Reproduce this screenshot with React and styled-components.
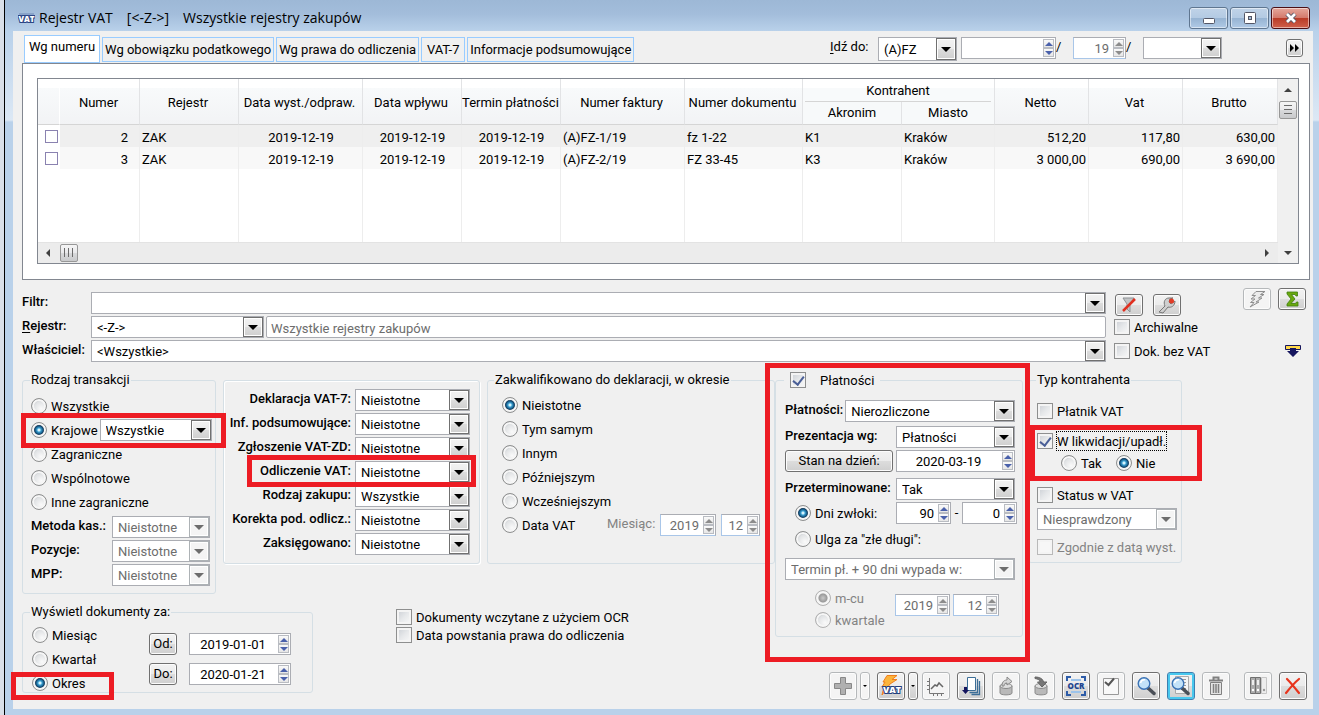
import styled, { createGlobalStyle, css } from "styled-components";

const GlobalStyle = createGlobalStyle`
  :root {
    --color-face: #f0f0f0;
    --color-frame: #b9d1ea;
    --color-line: #abadb3;
    --color-edge: #828790;
    --color-group: #d5dfe5;
    --color-text: #000;
    --color-muted: #6d6d6d;
    --color-mark: #ed1c24;
  }

  * {
    box-sizing: border-box;
  }

  body {
    margin: 0;
    font-family: Roboto, "DejaVu Sans Condensed", sans-serif;
    font-size: 13px;
    line-height: 16px;
    color: var(--color-text);
    background-color: #d9dfe8;
  }

  input, select, button {
    font: inherit;
    color: inherit;
    margin: 0;
  }
`;

/* ---------- window ---------- */

const Desktop = styled.div`
  min-height: 100vh;
  display: flex;
  padding-left: 4px;
`;

const Window = styled.main`
  flex: 1;
  min-width: 0;
  display: flex;
  flex-direction: column;
  border-left: 1px solid #000;
  padding: 0 6px 6px 8px;
  background: linear-gradient(
    #9db8d6 0,
    #a3bddb 14px,
    #b9d1ea 31px,
    #dce8f5 120px,
    #b9d1ea 122px
  );
`;

const TitleBar = styled.header`
  height: 31px;
  display: flex;
  align-items: center;
  gap: 4px;
  padding: 4px 3px 0 5px;
`;

const Title = styled.h1`
  flex: 1;
  display: flex;
  gap: 14px;
  margin: 0;
  font: 400 14px/20px "Open Sans", "Noto Sans", sans-serif;
`;

const WindowButtons = styled.div`
  display: flex;
  gap: 2px;
`;

const WindowButton = styled.button`
  width: 39px;
  height: 22px;
  padding: 0;
  display: grid;
  place-items: center;
  border: 1px solid ${(props) => (props.$close ? "#4c0f14" : "#5f7690")};
  border-radius: 3px;
  box-shadow: inset 0 0 0 1px rgba(255, 255, 255, 0.5);
  background: ${(props) =>
    props.$close
      ? "linear-gradient(#e5a79b 0, #d3796b 50%, #b83a26 50%, #d0604b)"
      : "linear-gradient(#c0d3e8 0, #b3cae3 50%, #96b3d2 50%, #b0cae6)"};
`;

const Content = styled.div`
  flex: 1;
  display: flex;
  flex-direction: column;
  background-color: var(--color-face);
`;

/* ---------- controls ---------- */

const ComboBox = styled.span`
  display: grid;
  flex: ${(props) => (props.$width ? "none" : "1")};
  width: ${(props) => (props.$width ? props.$width + "px" : "auto")};
  height: ${(props) => (props.$tall ? 24 : 22)}px;
  border: 1px solid var(--color-line);
  background-color: #fff;
`;

const ComboSelect = styled.select`
  grid-area: 1 / 1;
  min-width: 0;
  appearance: none;
  border: 0;
  padding: 2px 22px 0 5px;
  background: transparent;
  outline: none;

  &:disabled {
    color: var(--color-muted);
    opacity: 1;
  }
`;

const ComboCap = styled.span`
  grid-area: 1 / 1;
  justify-self: end;
  width: 20px;
  display: grid;
  place-items: center;
  pointer-events: none;
  border: 1px solid ${(props) => (props.$disabled ? "#adb2b5" : "#707070")};
  box-shadow: inset 0 0 0 1px #fff;
  background: ${(props) =>
    props.$disabled
      ? "#f4f4f4"
      : "linear-gradient(#f2f2f2 0, #ebebeb 50%, #dddddd 50%, #cfcfcf)"};
  color: ${(props) => (props.$disabled ? "#6d6d6d" : "#000")};
`;

const SpinBox = styled.span`
  display: flex;
  flex: ${(props) => (props.$width ? "none" : "1")};
  width: ${(props) => (props.$width ? props.$width + "px" : "auto")};
  height: 22px;
  padding-right: 1px;
  border: 1px solid var(--color-line);
  background-color: #fff;

  ${(props) =>
    props.$disabled &&
    css`
      border-left-color: #a9c6e8;
      border-bottom-color: #a9c6e8;
    `}
`;

const SpinInput = styled.input`
  flex: 1;
  width: 0;
  min-width: 0;
  border: 0;
  padding: 2px 4px 0 2px;
  background: transparent;
  outline: none;
  text-align: ${(props) => (props.$center ? "center" : "right")};

  &:disabled {
    color: var(--color-muted);
  }
`;

const SpinButtons = styled.span`
  width: 11px;
  display: grid;
  grid-template-rows: 1fr 1fr;
  padding: 1px 0;
`;

const SpinButton = styled.button`
  padding: 0;
  display: grid;
  place-items: center;
  border: 1px solid #b9bcc2;
  background: linear-gradient(#fafafa, #e6e6e6);
  color: #4a61ab;

  &:disabled {
    color: #8c8c8c;
  }
`;

const TextField = styled.input`
  flex: 1;
  min-width: 0;
  height: 22px;
  padding: 2px 4px 0;
  border: 1px solid var(--color-line);
  border-radius: 2px;
  background-color: #fff;
  color: var(--color-muted);
`;

const Option = styled.label`
  display: flex;
  align-items: center;
  gap: ${(props) => (props.$wide ? 14 : 4)}px;
  height: 16px;
  white-space: nowrap;
  color: ${(props) => (props.$disabled ? "#838383" : "inherit")};
`;

const OptionText = styled.span`
  padding-top: 2px;
  outline: ${(props) => (props.$focused ? "1px dotted #000" : "none")};
`;

const RadioInput = styled.input`
  appearance: none;
  flex: none;
  width: 16px;
  height: 16px;
  border: 1px solid #8e8f8f;
  border-radius: 50%;
  box-shadow: inset 0 0 0 2px #f6f6f6;
  background: radial-gradient(circle at 65% 70%, #fafafa 0, #e0e2e4 55%, #b9bdc2 75%);

  &:checked {
    background: radial-gradient(
      circle,
      #d5f3fd 0,
      #d5f3fd 1px,
      #3ea5d6 2px,
      #12507c 4px,
      #15344f 5px,
      #dcdfe2 6px
    );
  }

  &:disabled {
    border-color: #b1b1b1;
  }

  &:disabled:checked {
    background: radial-gradient(circle, #c9c9c9 0, #9a9a9a 4px, #e4e4e4 5px);
  }
`;

const CheckInput = styled.input`
  appearance: none;
  flex: none;
  width: 16px;
  height: 16px;
  display: grid;
  place-items: center;
  border: 1px solid #8e8f8f;
  box-shadow: inset 0 0 0 2px #f4f4f4;
  background: linear-gradient(135deg, #c9cdd3 0, #e6e8ea 50%, #fafafa);

  &:checked::after {
    content: "";
    width: 5px;
    height: 9px;
    margin-bottom: 2px;
    border: solid #4a5f97;
    border-width: 0 2px 2px 0;
    transform: rotate(38deg);
  }

  &:disabled {
    border-color: #b9b9b9;
    background: #f7f7f7;
  }
`;

const Caption = styled.label`
  font-weight: ${(props) => (props.$light ? 400 : 500)};
  line-height: 20px;
  align-self: flex-start;
  white-space: nowrap;
  color: ${(props) => (props.$muted ? "#838383" : "inherit")};
`;

const PushButton = styled.button`
  flex: none;
  width: ${(props) => props.$width || 28}px;
  height: ${(props) => props.$height || 22}px;
  padding: 0;
  display: grid;
  place-items: center;
  border: 1px solid #707070;
  border-radius: 3px;
  box-shadow: inset 0 0 0 1px #fcfcfc;
  background: linear-gradient(#f2f2f2 0, #ebebeb 50%, #dddddd 50%, #cfcfcf);

  &:disabled {
    border-color: #b5b8ba;
    background: #f4f4f4;
  }

  ${(props) =>
    props.$active &&
    css`
      border-color: #3c7fb1;
      box-shadow: inset 0 0 0 2px #48c8ee;
    `}
`;

const Mark = styled.span`
  position: absolute;
  z-index: 2;
  inset: ${(props) => props.$inset};
  border: 5px solid var(--color-mark);
  pointer-events: none;
`;

function Triangle({ up, size = 8 }) {
  return (
    <svg width={size} height={size / 2} viewBox="0 0 8 4">
      <path d={up ? "M0 4L4 0L8 4Z" : "M0 0H8L4 4Z"} fill="currentColor" />
    </svg>
  );
}

function Combo({ value, width, disabled, tall, ...rest }) {
  return (
    <ComboBox $width={width} $tall={tall}>
      <ComboSelect disabled={disabled} defaultValue={value} {...rest}>
        <option value={value}>{value}</option>
      </ComboSelect>
      <ComboCap $disabled={disabled}>
        <Triangle size={10} />
      </ComboCap>
    </ComboBox>
  );
}

function Spin({ value, width, disabled, center, label }) {
  return (
    <SpinBox $width={width} $disabled={disabled}>
      <SpinInput
        type="text"
        aria-label={label}
        defaultValue={value}
        disabled={disabled}
        $center={center}
      />
      <SpinButtons>
        <SpinButton type="button" aria-label="Zwiększ" disabled={disabled}>
          <Triangle up />
        </SpinButton>
        <SpinButton type="button" aria-label="Zmniejsz" disabled={disabled}>
          <Triangle />
        </SpinButton>
      </SpinButtons>
    </SpinBox>
  );
}

function Radio({ name, children, checked, disabled }) {
  return (
    <Option $disabled={disabled}>
      <RadioInput
        type="radio"
        name={name}
        defaultChecked={checked}
        disabled={disabled}
      />
      <OptionText>{children}</OptionText>
    </Option>
  );
}

function Check({ children, checked, disabled, focused, wide }) {
  return (
    <Option $disabled={disabled} $wide={wide}>
      <CheckInput type="checkbox" defaultChecked={checked} disabled={disabled} />
      <OptionText $focused={focused}>{children}</OptionText>
    </Option>
  );
}

/* ---------- tabs ---------- */

const TabBar = styled.div`
  height: 32px;
  display: flex;
  align-items: flex-end;
  padding: 0 10px 0 11px;
`;

const Tabs = styled.nav`
  display: flex;
  align-items: flex-end;
  gap: 2px;
`;

const Tab = styled.button`
  min-width: 44px;
  height: ${(props) => (props.$active ? 28 : 25)}px;
  padding: ${(props) => (props.$active ? "0 4px 4px" : "0 2px")};
  margin-bottom: ${(props) => (props.$active ? 0 : 1)}px;
  border: 1px solid #99ccff;
  background-color: ${(props) => (props.$active ? "#fff" : "transparent")};
  white-space: nowrap;
`;

const GoTo = styled.div`
  margin-left: auto;
  height: 26px;
  display: flex;
  align-items: flex-start;
`;

const GoToLabel = styled.label`
  width: 48px;
  line-height: 20px;
`;

const Slash = styled.span`
  width: ${(props) => props.$width}px;
  line-height: 20px;
`;

const JumpButton = styled(PushButton)`
  margin: 2px 0 0 64px;
`;

const TabPanel = styled.section`
  margin: 0 3px 0 9px;
  padding: 14px 10px 15px 14px;
  border: 1px solid var(--color-edge);
  background-color: #fff;
`;

/* ---------- grid ---------- */

const Grid = styled.div`
  display: grid;
  grid-template-columns: 1fr 20px;
  grid-template-rows: auto 21px;
  border: 1px solid var(--color-edge);
`;

const Table = styled.table`
  width: 100%;
  height: 163px;
  table-layout: fixed;
  border-collapse: separate;
  border-spacing: 0;
`;

const HeadCell = styled.th`
  height: ${(props) => (props.$half ? 23 : 46)}px;
  padding: ${(props) => (props.$half ? 0 : "2px 2px 0 0")};
  overflow: hidden;
  font-weight: 400;
  white-space: nowrap;
  border-right: 1px solid ${(props) => (props.$pale ? "#fff" : "#e2e3e5")};
  border-bottom: 1px solid #d5d5d5;
  background: ${(props) =>
    props.$half
      ? "#f7f9fa"
      : "linear-gradient(#fff 9px, #f8fafb 9px, #f2f3f5)"};
`;

const GroupCell = styled(HeadCell)`
  border-bottom: 0;
  background: linear-gradient(#fff 9px, #f8fafb 9px);
`;

const GroupName = styled.span`
  display: block;
  height: 22px;
  margin: 0 3px 0 2px;
  line-height: 22px;
  border-bottom: 1px solid #d5d5d5;
`;

const Cell = styled.td`
  height: 22px;
  padding: 3px ${(props) => (props.$numeric ? 2 : 1)}px 0 2px;
  text-align: ${(props) => props.$align || "left"};
  border-right: 1px solid #ededed;
  background-color: ${(props) => props.$tone || "transparent"};
`;

const NumberCell = styled(Cell)`
  padding-right: 11px;
`;

const TickCell = styled.td`
  padding: 0 0 0 7px;
`;

const RowTick = styled.input`
  appearance: none;
  display: block;
  width: 13px;
  height: 13px;
  border: 1px solid #8a82b0;
  background-color: #fff;
`;

const VerticalBar = styled.div`
  display: flex;
  flex-direction: column;
  align-items: center;
  padding-top: 9px;
  gap: 9px;
  background-color: #f0f0f0;
  color: #404040;
`;

const HorizontalBar = styled.div`
  display: flex;
  align-items: center;
  gap: 9px;
  padding: 0 8px 0 7px;
  border-top: 1px solid #e3e3e3;
  background-color: #ececec;
`;

const Corner = styled.div`
  display: grid;
  place-items: center;
  background-color: #f0f0f0;
  color: #404040;
`;

const Thumb = styled.span`
  width: 18px;
  height: 18px;
  display: grid;
  place-items: center;
  border: 1px solid #979797;
  border-radius: 2px;
  background: linear-gradient(#f5f5f5 0, #e9e9eb 50%, #d9dadc 50%, #c9cacc);
`;

const EndArrow = styled.svg`
  margin-left: auto;
`;

const columns = [22, 80, 99, 124, 99, 99, 124, 118, 99, 93, 94, 94, 95];

const rows = [
  ["2", "ZAK", "2019-12-19", "2019-12-19", "2019-12-19", "(A)FZ-1/19", "fz 1-22", "K1", "Kraków", "512,20", "117,80", "630,00"],
  ["3", "ZAK", "2019-12-19", "2019-12-19", "2019-12-19", "(A)FZ-2/19", "FZ 33-45", "K3", "Kraków", "3 000,00", "690,00", "3 690,00"],
];

function cellAlign(i) {
  if (i >= 9) return "right";
  if (i >= 2 && i <= 4) return "center";
  return "left";
}

function Register() {
  return (
    <Grid>
      <Table>
        <colgroup>
          {columns.map((width, i) => (
            <col key={i} width={width} />
          ))}
        </colgroup>
        <thead>
          <tr>
            <HeadCell rowSpan={2} $pale />
            <HeadCell rowSpan={2}>Numer</HeadCell>
            <HeadCell rowSpan={2}>Rejestr</HeadCell>
            <HeadCell rowSpan={2}>Data wyst./odpraw.</HeadCell>
            <HeadCell rowSpan={2}>Data wpływu</HeadCell>
            <HeadCell rowSpan={2}>Termin płatności</HeadCell>
            <HeadCell rowSpan={2}>Numer faktury</HeadCell>
            <HeadCell rowSpan={2}>Numer dokumentu</HeadCell>
            <GroupCell colSpan={2} $half>
              <GroupName>Kontrahent</GroupName>
            </GroupCell>
            <HeadCell rowSpan={2}>Netto</HeadCell>
            <HeadCell rowSpan={2}>Vat</HeadCell>
            <HeadCell rowSpan={2}>Brutto</HeadCell>
          </tr>
          <tr>
            <HeadCell $half>Akronim</HeadCell>
            <HeadCell $half>Miasto</HeadCell>
          </tr>
        </thead>
        <tbody>
          {rows.map((row, r) => {
            const tone = r === 0 ? "#efefef" : "#f8f8f8";
            return (
              <tr key={r}>
                <TickCell>
                  <RowTick type="checkbox" aria-label={"Zaznacz " + row[0]} />
                </TickCell>
                <NumberCell $align="right" $tone={tone}>
                  {row[0]}
                </NumberCell>
                {row.slice(1).map((text, i) => (
                  <Cell
                    key={i}
                    $align={cellAlign(i + 1)}
                    $numeric={i >= 8}
                    $tone={tone}
                  >
                    {text}
                  </Cell>
                ))}
              </tr>
            );
          })}
          <tr>
            <td />
            {columns.slice(1).map((_, i) => (
              <BlankCell key={i} />
            ))}
          </tr>
        </tbody>
      </Table>
      <VerticalBar>
        <Triangle up />
        <Thumb>
          <svg width="10" height="10" viewBox="0 0 10 10" stroke="#6b6b6b">
            <path d="M1 .5H9M1 4.5H9M1 8.5H9" />
          </svg>
        </Thumb>
      </VerticalBar>
      <HorizontalBar>
        <svg width="6" height="8" viewBox="0 0 6 8">
          <path d="M5 0V8L1 4Z" fill="#404040" />
        </svg>
        <Thumb>
          <svg width="10" height="10" viewBox="0 0 10 10" stroke="#6b6b6b">
            <path d="M.5 0V9M4.5 0V9M8.5 0V9" />
          </svg>
        </Thumb>
        <EndArrow width="6" height="8" viewBox="0 0 6 8">
          <path d="M1 0V8L5 4Z" fill="#404040" />
        </EndArrow>
      </HorizontalBar>
      <Corner>
        <Triangle />
      </Corner>
    </Grid>
  );
}

const BlankCell = styled(Cell)`
  height: auto;
`;

/* ---------- filter ---------- */

const FilterArea = styled.section`
  display: flex;
  gap: 8px;
  padding: 8px 7px 10px 9px;
`;

const FilterFields = styled.div`
  flex: 1;
  display: grid;
  gap: 2px;
  padding-top: 4px;
`;

const FilterRow = styled.div`
  display: grid;
  grid-template-columns: 69px 1fr;
`;

const FilterControls = styled.div`
  display: flex;
  gap: 2px;
`;

const FilterSide = styled.div`
  width: 121px;
  display: grid;
  align-content: start;
  gap: 8px;
  padding-top: 6px;
`;

const SideButtons = styled.div`
  display: flex;
  gap: 10px;
  height: 17px;
  padding-left: 1px;
`;

const FilterTools = styled.div`
  display: flex;
  flex-direction: column;
  align-items: flex-end;
  justify-content: space-between;
  padding-bottom: 5px;
`;

const ToolPair = styled.div`
  display: flex;
  gap: ${(props) => props.$gap}px;
`;

const MoreButton = styled.button`
  width: 27px;
  padding: 0;
  border: 0;
  background: none;
  line-height: 0;
`;

const Key = styled.u`
  text-underline-offset: 2px;
`;

function Filters() {
  return (
    <FilterArea>
      <FilterFields>
        <FilterRow>
          <Caption htmlFor="filtr">Filtr:</Caption>
          <Combo id="filtr" value="" />
        </FilterRow>
        <FilterRow>
          <Caption htmlFor="rejestr">
            <Key>R</Key>ejestr:
          </Caption>
          <FilterControls>
            <Combo id="rejestr" value="<-Z->" width={173} />
            <TextField
              readOnly
              aria-label="Nazwa rejestru"
              defaultValue="Wszystkie rejestry zakupów"
            />
          </FilterControls>
        </FilterRow>
        <FilterRow>
          <Caption htmlFor="wlasciciel">Właściciel:</Caption>
          <Combo id="wlasciciel" value="<Wszystkie>" />
        </FilterRow>
      </FilterFields>
      <FilterSide>
        <SideButtons>
          <PushButton type="button" aria-label="Wyczyść filtr">
            <svg width="18" height="18" viewBox="0 0 18 18">
              <path d="M3 2H14L10 8V16L7 13V8Z" fill="#c2c4c6" stroke="#8d9194" />
              <path d="M3 15L15 3" stroke="#e03020" strokeWidth="2.5" />
            </svg>
          </PushButton>
          <PushButton type="button" aria-label="Konstruktor filtra">
            <svg width="18" height="18" viewBox="0 0 18 18">
              <path
                d="M1 16L7 10C5 6 7 2 11 2H15L12 3L11 6L13 8L17 5C17 10 13 12 10 11L5 17Z"
                fill="#cfcfcf"
                stroke="#777"
              />
              <circle cx="13.500" cy="5" r="2.500" fill="#e23b26" />
            </svg>
          </PushButton>
        </SideButtons>
        <Check>Archiwalne</Check>
        <Check>Dok. bez VAT</Check>
      </FilterSide>
      <FilterTools>
        <ToolPair $gap={7}>
          <PushButton type="button" aria-label="Aktualizuj" disabled>
            <svg width="18" height="18" viewBox="0 0 18 18">
              <path
                d="M8 1.500H17L12.500 4.500H16L10.500 8H14L8 12H11L2 17L6 12.500H2.500L7 9H3L7.500 5.500H4Z"
                fill="#ececec"
                stroke="#8f8f8f"
              />
            </svg>
          </PushButton>
          <PushButton type="button" aria-label="Suma">
            <svg width="16" height="16" viewBox="0 0 16 16">
              <path
                d="M3 1H13.500V5H12L11 3.500H7.500L11 8L7 12.500H11.500L12.500 11H14V15H3V13L7 8L3 3Z"
                fill="#6aa80f"
                stroke="#3f7d10"
                strokeWidth=".8"
              />
            </svg>
          </PushButton>
        </ToolPair>
        <MoreButton type="button" aria-label="Rozwiń">
          <svg width="16" height="12" viewBox="0 0 16 12">
            <path d="M.5 .5H15.500V4.500H.5Z" fill="#ffd84a" stroke="#15155e" />
            <path d="M5 3H11V6H14L8 12L2 6H5Z" fill="#15155e" />
          </svg>
        </MoreButton>
      </FilterTools>
    </FilterArea>
  );
}

/* ---------- option groups ---------- */

const Groups = styled.div`
  flex: 1;
  display: flex;
  justify-content: space-between;
  padding-left: 9px;
`;

const GroupsLeft = styled.div`
  display: grid;
  align-content: start;
  gap: 10px;
`;

const GroupsRight = styled.div`
  flex: 1;
  display: flex;
  flex-direction: column;
`;

const GroupLine = styled.div`
  display: flex;
  align-items: flex-start;
  gap: ${(props) => props.$gap || 0}px;
`;

const Group = styled.fieldset`
  position: relative;
  width: ${(props) => props.$width}px;
  min-width: 0;
  margin: ${(props) => (props.$untitled ? "8px 0 0" : 0)};
  padding: ${(props) => props.$padding};
  border: 1px solid var(--color-group);
  border-radius: 3px;
  box-shadow: ${(props) =>
    props.$untitled ? "inset 1px 1px 0 #fff, 1px 1px 0 #fff" : "none"};
`;

const Legend = styled.legend`
  height: 16px;
  padding: 0 ${(props) => (props.$wide ? 6 : 1)}px;
  margin-left: -1px;
`;

const Lines = styled.div`
  display: grid;
  grid-auto-rows: 24px;
  align-items: center;
  padding-left: ${(props) => props.$indent || 0}px;
`;

const Line = styled.div`
  position: relative;
  display: flex;
  align-items: center;
  height: ${(props) => (props.$height ? props.$height + "px" : "22px")};
  margin-top: ${(props) => props.$top || 0}px;
  padding-left: ${(props) => props.$indent || 0}px;
  gap: ${(props) => props.$gap || 0}px;
`;

const PairLine = styled(Line)`
  display: grid;
  grid-template-columns: ${(props) => props.$columns};
`;

const Kinds = styled.div`
  display: grid;
  gap: 2px;
`;

const KindLine = styled.div`
  position: relative;
  display: grid;
  grid-template-columns: 1fr 115px;
  gap: 4px;
  text-align: right;

  & > label {
    justify-self: end;
  }
`;

const Period = styled.div`
  display: flex;
  gap: 54px;
`;

const PeriodDates = styled.div`
  display: grid;
  grid-template-columns: 28px 102px;
  align-content: start;
  gap: 8px 12px;
  padding-top: 6px;
`;

const PeriodKinds = styled.div`
  display: grid;
  grid-auto-rows: 16px;
  gap: 8px;
  padding-left: 1px;
  width: 64px;
`;

const ExtraChecks = styled.div`
  display: grid;
  gap: 2px;
  padding-top: 5px;
`;

const Quarter = styled.div`
  display: grid;
  grid-template-columns: 77px auto auto;
  justify-content: start;
  gap: 0 3px;
  padding: 8px 0 0 30px;
`;

const QuarterKinds = styled.div`
  display: grid;
  gap: 6px;
  padding-top: 2px;
`;

const Dash = styled.span`
  width: 11px;
  text-align: center;
`;

const QuarterSpin = styled.div`
  padding-top: 6px;
`;

const SpinAside = styled.div`
  padding-left: 5px;
`;

const kinds = [
  ["Deklaracja VAT-7:", "Nieistotne"],
  ["Inf. podsumowujące:", "Nieistotne"],
  ["Zgłoszenie VAT-ZD:", "Nieistotne"],
  ["Odliczenie VAT:", "Nieistotne", true],
  ["Rodzaj zakupu:", "Wszystkie"],
  ["Korekta pod. odlicz.:", "Nieistotne"],
  ["Zaksięgowano:", "Nieistotne"],
];

function Transactions() {
  return (
    <Group $width={194} $padding="6px 3px 7px 8px">
      <Legend>Rodzaj transakcji</Legend>
      <Lines>
        <Radio name="rodzaj">Wszystkie</Radio>
        <Line $gap={2} $height={24}>
          <Radio name="rodzaj" checked>
            Krajowe
          </Radio>
          <Combo aria-label="Krajowe" value="Wszystkie" />
          <Mark $inset="-5px -14px -6px -10px" />
        </Line>
        <Radio name="rodzaj">Zagraniczne</Radio>
        <Radio name="rodzaj">Wspólnotowe</Radio>
        <Radio name="rodzaj">Inne zagraniczne</Radio>
      </Lines>
      {["Metoda kas.:", "Pozycje:", "MPP:"].map((text) => (
        <PairLine key={text} $top={2} $columns="81px 98px">
          <Caption htmlFor={text}>{text}</Caption>
          <Combo id={text} value="Nieistotne" disabled />
        </PairLine>
      ))}
    </Group>
  );
}

function DocumentKinds() {
  return (
    <Group $untitled $width={257} $padding="8px 9px 8px 2px">
      <Kinds>
        {kinds.map(([text, value, marked]) => (
          <KindLine key={text}>
            <Caption htmlFor={text}>{text}</Caption>
            <Combo id={text} value={value} />
            {marked && <Mark $inset="-6px -6px -4px 21px" />}
          </KindLine>
        ))}
      </Kinds>
    </Group>
  );
}

function Declaration() {
  return (
    <Group $width={288} $padding="5px 8px 26px 7px">
      <Legend>Zakwalifikowano do deklaracji, w okresie</Legend>
      <Lines $indent={7}>
        <Radio name="okres" checked>
          Nieistotne
        </Radio>
        <Radio name="okres">Tym samym</Radio>
        <Radio name="okres">Innym</Radio>
        <Radio name="okres">Późniejszym</Radio>
        <Radio name="okres">Wcześniejszym</Radio>
        <PairLine $columns="105px 53px 56px 44px">
          <Radio name="okres">Data VAT</Radio>
          <Caption as="span" $muted $light>
            Miesiąc:
          </Caption>
          <Spin label="Rok" value="2019" width={56} disabled />
          <SpinAside>
            <Spin label="Miesiąc" value="12" width={39} disabled />
          </SpinAside>
        </PairLine>
      </Lines>
    </Group>
  );
}

function Payments() {
  return (
    <Group $width={248} $padding="12px 7px 8px 9px">
      <Legend $wide>
        <Check checked wide>
          Płatności
        </Check>
      </Legend>
      <Line $gap={2}>
        <Caption htmlFor="platnosci">Płatności:</Caption>
        <Combo id="platnosci" value="Nierozliczone" />
      </Line>
      <PairLine $top={4} $columns="111px 1fr">
        <Caption htmlFor="prezentacja">Prezentacja wg:</Caption>
        <Combo id="prezentacja" value="Płatności" />
      </PairLine>
      <PairLine $top={2} $columns="111px 1fr">
        <PushButton type="button" $width={108}>
          Stan na dzień:
        </PushButton>
        <Spin label="Stan na dzień" value="2020-03-19" center />
      </PairLine>
      <PairLine $top={6} $columns="111px 1fr">
        <Caption htmlFor="przeterminowane">Przeterminowane:</Caption>
        <Combo id="przeterminowane" value="Tak" />
      </PairLine>
      <PairLine $top={2} $columns="101px 55px 11px 55px" $indent={10}>
        <Radio name="przeterminowane" checked>
          Dni zwłoki:
        </Radio>
        <Spin label="Dni zwłoki od" value="90" width={55} />
        <Dash>-</Dash>
        <Spin label="Dni zwłoki do" value="0" width={55} />
      </PairLine>
      <Line $top={4} $indent={10}>
        <Radio name="przeterminowane">Ulga za "złe długi":</Radio>
      </Line>
      <Line $top={8}>
        <Combo
          aria-label="Termin płatności"
          value="Termin pł. + 90 dni wypada w:"
          disabled
        />
      </Line>
      <Quarter>
        <QuarterKinds>
          <Radio name="termin" checked disabled>
            m-cu
          </Radio>
          <Radio name="termin" disabled>
            kwartale
          </Radio>
        </QuarterKinds>
        <QuarterSpin>
          <Spin label="Rok terminu" value="2019" width={55} disabled />
        </QuarterSpin>
        <QuarterSpin>
          <Spin label="Miesiąc terminu" value="12" width={46} disabled />
        </QuarterSpin>
      </Quarter>
      <Mark $inset="-25px -8px -26px -11px" />
    </Group>
  );
}

function Contractor() {
  return (
    <Group $width={154} $padding="12px 4px 4px 8px">
      <Legend>Typ kontrahenta</Legend>
      <Line>
        <Check>Płatnik VAT</Check>
      </Line>
      <Line $top={8}>
        <Check checked focused>
          W likwidacji/upadł.
        </Check>
        <Mark $inset="-5px -25px -29px -7px" />
      </Line>
      <PairLine $indent={24} $columns="55px auto">
        <Radio name="likwidacja">Tak</Radio>
        <Radio name="likwidacja" checked>
          Nie
        </Radio>
      </PairLine>
      <Line $top={10}>
        <Check>Status w VAT</Check>
      </Line>
      <Line $top={2}>
        <Combo aria-label="Status w VAT" value="Niesprawdzony" disabled />
      </Line>
      <Line $top={6}>
        <Check disabled>Zgodnie z datą wyst.</Check>
      </Line>
    </Group>
  );
}

function DatePeriod() {
  return (
    <Group $width={291} $padding="7px 8px 1px 8px">
      <Legend>Wyświetl dokumenty za:</Legend>
      <Period>
        <PeriodKinds>
          <Radio name="za">Miesiąc</Radio>
          <Radio name="za">Kwartał</Radio>
          <Line $height={16}>
            <Radio name="za" checked>
              Okres
            </Radio>
            <Mark $inset="-3px -17px -9px -21px" />
          </Line>
        </PeriodKinds>
        <PeriodDates>
          <PushButton type="button">Od:</PushButton>
          <Spin label="Od" value="2019-01-01" center />
          <PushButton type="button">Do:</PushButton>
          <Spin label="Do" value="2020-01-21" center />
        </PeriodDates>
      </Period>
    </Group>
  );
}

/* ---------- toolbar ---------- */

const Toolbar = styled.div`
  display: flex;
  justify-content: flex-end;
  gap: 7px;
  margin-top: auto;
  padding: 0 6px 9px 0;
`;

const Spacer = styled.span`
  width: 0;
`;

function Tool({ label, disabled, active, width = 28, children }) {
  return (
    <PushButton
      type="button"
      aria-label={label}
      title={label}
      disabled={disabled}
      $active={active}
      $width={width}
      $height={28}
    >
      <svg width={width - 6} height="22" viewBox={`0 0 ${width - 6} 22`} fill="none">
        {children}
      </svg>
    </PushButton>
  );
}

function Cylinder() {
  return (
    <>
      <path
        d="M5 11V18C5 20.500 17 20.500 17 18V11"
        fill="#b9b9b9"
        stroke="#8a8a8a"
      />
      <ellipse cx="11" cy="11" rx="6" ry="2.500" fill="#dedede" stroke="#8a8a8a" />
    </>
  );
}

function Lens({ x = 0 }) {
  return (
    <g transform={`translate(${x} 0)`}>
      <path d="M12 13L18 18.500" stroke="#4a4f57" strokeWidth="3.500" strokeLinecap="round" />
      <circle cx="8" cy="8.500" r="5.800" fill="#c3e2f8" stroke="#3a72b5" strokeWidth="1.400" />
      <path d="M4.500 8C5 5.500 7 4.500 9 4.800" stroke="#fff" strokeWidth="1.500" />
    </g>
  );
}

function Actions() {
  return (
    <Toolbar>
      <ToolPair $gap={3}>
        <Tool label="Dodaj" disabled>
          <path
            d="M8.500 2.500H13.500V8.500H19.500V13.500H13.500V19.500H8.500V13.500H2.500V8.500H8.500Z"
            fill="#b0b0b0"
            stroke="#888"
          />
        </Tool>
        <Tool label="Dodaj inny" width={10} disabled>
          <path d="M0 10H4L2 12Z" fill="#000" />
        </Tool>
      </ToolPair>
      <ToolPair $gap={4}>
        <ToolPair $gap={3}>
          <Tool label="Rejestruj VAT">
            <path
              d="M7 .5H17L12 4.500H17L10 9L5 16L2 20L4 12H2L5 7H3Z"
              fill="#fbb43c"
              stroke="#f07f1c"
            />
            <text
              x="12"
              y="18"
              textAnchor="middle"
              fontFamily="Open Sans, sans-serif"
              fontSize="9"
              fontWeight="800"
              fill="#fff"
              stroke="#23407f"
              strokeWidth="2"
              paintOrder="stroke"
            >
              VAT
            </text>
          </Tool>
          <Tool label="Rejestruj inny" width={10}>
            <path d="M0 10H4L2 12Z" fill="#000" />
          </Tool>
        </ToolPair>
        <Tool label="Wykres" disabled>
          <path d="M4.500 3V18.500H19M2 6.500H4M2 10.500H4M2 14.500H4M8.500 19V21M12.500 19V21M16.500 19V21" stroke="#777" />
          <path d="M6 14L10 10L12 11L14 8L18 12" stroke="#666" strokeWidth="1.500" />
        </Tool>
      </ToolPair>
      <Tool label="Kopiuj">
        <path d="M7.500 2.500H15.500V15.500H7.500Z" fill="#fff" stroke="#3c6e97" />
        <path d="M17.500 4V17.500H9.500M19.500 6V19.500H11.500" stroke="#3c6e97" strokeWidth="1.300" />
        <path d="M4 12H7V15H9L5.500 19L2 15H4Z" fill="#15155e" />
      </Tool>
      <Tool label="Eksport" disabled>
        <Cylinder />
        <path d="M7 11C7 6 10 5 12 5V2L17 6.500L12 10V8C10 8 9 9 9 11Z" fill="#d5d5d5" stroke="#888" />
      </Tool>
      <Tool label="Import" disabled>
        <Cylinder />
        <path d="M5 2C10 2 13 4 13.500 7H17L12 12L7.500 7H10C10 5 8 4 5 3.500Z" fill="#777" stroke="#666" />
      </Tool>
      <Tool label="OCR">
        <path d="M2 6V2H6M16 2H20V6M20 16V20H16M6 20H2V16" stroke="#2d5ca8" strokeWidth="2" />
        <path d="M6 5H16M6 17H16" stroke="#9cc3ea" strokeWidth="2" />
        <text
          x="11"
          y="14"
          textAnchor="middle"
          fontFamily="Open Sans, sans-serif"
          fontSize="8"
          fontWeight="800"
          fill="#1f4690"
        >
          OCR
        </text>
      </Tool>
      <Tool label="Zaznacz" disabled>
        <path d="M3.500 3.500H18.500V19.500H3.500Z" fill="#f8f8f8" stroke="#999" />
        <path d="M5 7L8.500 10L14 3.500" stroke="#555" strokeWidth="2" />
      </Tool>
      <Tool label="Podgląd">
        <Lens x={1} />
      </Tool>
      <Tool label="Podgląd dokumentu" active>
        <path d="M5.500 1.500H18.500V18.500H5.500Z" fill="#f5f5f5" stroke="#aaa" />
        <path d="M8 4.500H16M8 7.500H16M8 10.500H16M8 13.500H16" stroke="#999" />
        <Lens />
      </Tool>
      <Tool label="Usuń" disabled>
        <path d="M5.500 7.500H16.500V19.500H5.500Z" fill="#e4e4e4" stroke="#808080" />
        <path d="M8.500 9V18M11 9V18M13.500 9V18" stroke="#808080" strokeWidth="1.500" />
        <path d="M4 5.500H18M8.500 5V2.500H13.500V5" stroke="#808080" strokeWidth="2" />
      </Tool>
      <Spacer />
      <Tool label="Archiwum" disabled>
        <path d="M3.500 2.500H8.500V18.500H3.500ZM8.500 2.500H13.500V18.500H8.500Z" fill="#ababab" stroke="#6f6f6f" />
        <path d="M14.500 2.500H19.500V18.500H14.500Z" fill="#ededed" stroke="#c5c5c5" />
        <path d="M5 5H7V10H5ZM10 5H12V10H10Z" fill="#eee" />
        <circle cx="6" cy="15" r="1.200" fill="#fff" />
        <circle cx="11" cy="15" r="1.200" fill="#fff" />
        <circle cx="17" cy="15" r="1.200" fill="#999" />
      </Tool>
      <Tool label="Zamknij">
        <path d="M5 4C9 8 13 13 17 18M17 4C12 8 8 13 4 18" stroke="#e8341c" strokeWidth="2.200" strokeLinecap="round" />
      </Tool>
    </Toolbar>
  );
}

function App() {
  return (
    <Desktop>
      <GlobalStyle />
      <Window>
        <TitleBar>
          <svg width="17" height="14" viewBox="0 0 17 14">
            <path d="M1 2H16V12H1Z" fill="#5a74a8" opacity=".35" />
            <text
              x="8.500"
              y="11"
              textAnchor="middle"
              fontFamily="Open Sans, sans-serif"
              fontSize="8"
              fontWeight="800"
              fill="#fff"
              stroke="#2b4585"
              strokeWidth="2"
              paintOrder="stroke"
            >
              VAT
            </text>
          </svg>
          <Title>
            <span>Rejestr VAT</span>
            <span>{"[<-Z->]"}</span>
            <span>Wszystkie rejestry zakupów</span>
          </Title>
          <WindowButtons>
            <WindowButton type="button" aria-label="Minimalizuj">
              <svg width="14" height="12" viewBox="0 0 14 12">
                <rect x="1.500" y="6.500" width="11" height="5" rx="1" fill="#fff" stroke="#535666" />
              </svg>
            </WindowButton>
            <WindowButton type="button" aria-label="Maksymalizuj">
              <svg width="14" height="12" viewBox="0 0 14 12">
                <rect x="1.500" y=".5" width="11" height="11" rx="1" fill="#fff" stroke="#535666" />
                <rect x="5.500" y="4.500" width="3" height="3" fill="#a5bdd8" stroke="#535666" />
              </svg>
            </WindowButton>
            <WindowButton type="button" aria-label="Zamknij okno" $close>
              <svg width="14" height="12" viewBox="0 0 14 12">
                <path d="M3 2L11 10M11 2L3 10" stroke="#535666" strokeWidth="4.500" />
                <path d="M3 2L11 10M11 2L3 10" stroke="#fff" strokeWidth="2.700" />
              </svg>
            </WindowButton>
          </WindowButtons>
        </TitleBar>
        <Content>
          <TabBar>
            <Tabs>
              <Tab type="button" $active>
                Wg numeru
              </Tab>
              <Tab type="button">Wg obowiązku podatkowego</Tab>
              <Tab type="button">Wg prawa do odliczenia</Tab>
              <Tab type="button">VAT-7</Tab>
              <Tab type="button">Informacje podsumowujące</Tab>
            </Tabs>
            <GoTo>
              <GoToLabel htmlFor="idz">
                <Key>I</Key>dź do:
              </GoToLabel>
              <Combo id="idz" value="(A)FZ" width={79} tall />
              <Slash $width={4} />
              <Spin label="Numer" value="" width={95} />
              <Slash $width={17}>/</Slash>
              <Spin label="Rok" value="19" width={53} disabled />
              <Slash $width={17}>/</Slash>
              <Combo aria-label="Seria" value="" width={79} />
              <JumpButton type="button" aria-label="Dalej" $width={17} $height={18}>
                <svg width="11" height="8" viewBox="0 0 11 8">
                  <path d="M1 0V8L5 4ZM6 0V8L10 4Z" fill="#000" />
                </svg>
              </JumpButton>
            </GoTo>
          </TabBar>
          <TabPanel>
            <Register />
          </TabPanel>
          <Filters />
          <Groups>
            <GroupsLeft>
              <GroupLine $gap={7}>
                <Transactions />
                <DocumentKinds />
                <Declaration />
              </GroupLine>
              <GroupLine $gap={83}>
                <DatePeriod />
                <ExtraChecks>
                  <Check>Dokumenty wczytane z użyciem OCR</Check>
                  <Check>Data powstania prawa do odliczenia</Check>
                </ExtraChecks>
              </GroupLine>
            </GroupsLeft>
            <GroupsRight>
              <GroupLine $gap={5}>
                <Payments />
                <Contractor />
              </GroupLine>
              <Actions />
            </GroupsRight>
          </Groups>
        </Content>
      </Window>
    </Desktop>
  );
}

export default App;
